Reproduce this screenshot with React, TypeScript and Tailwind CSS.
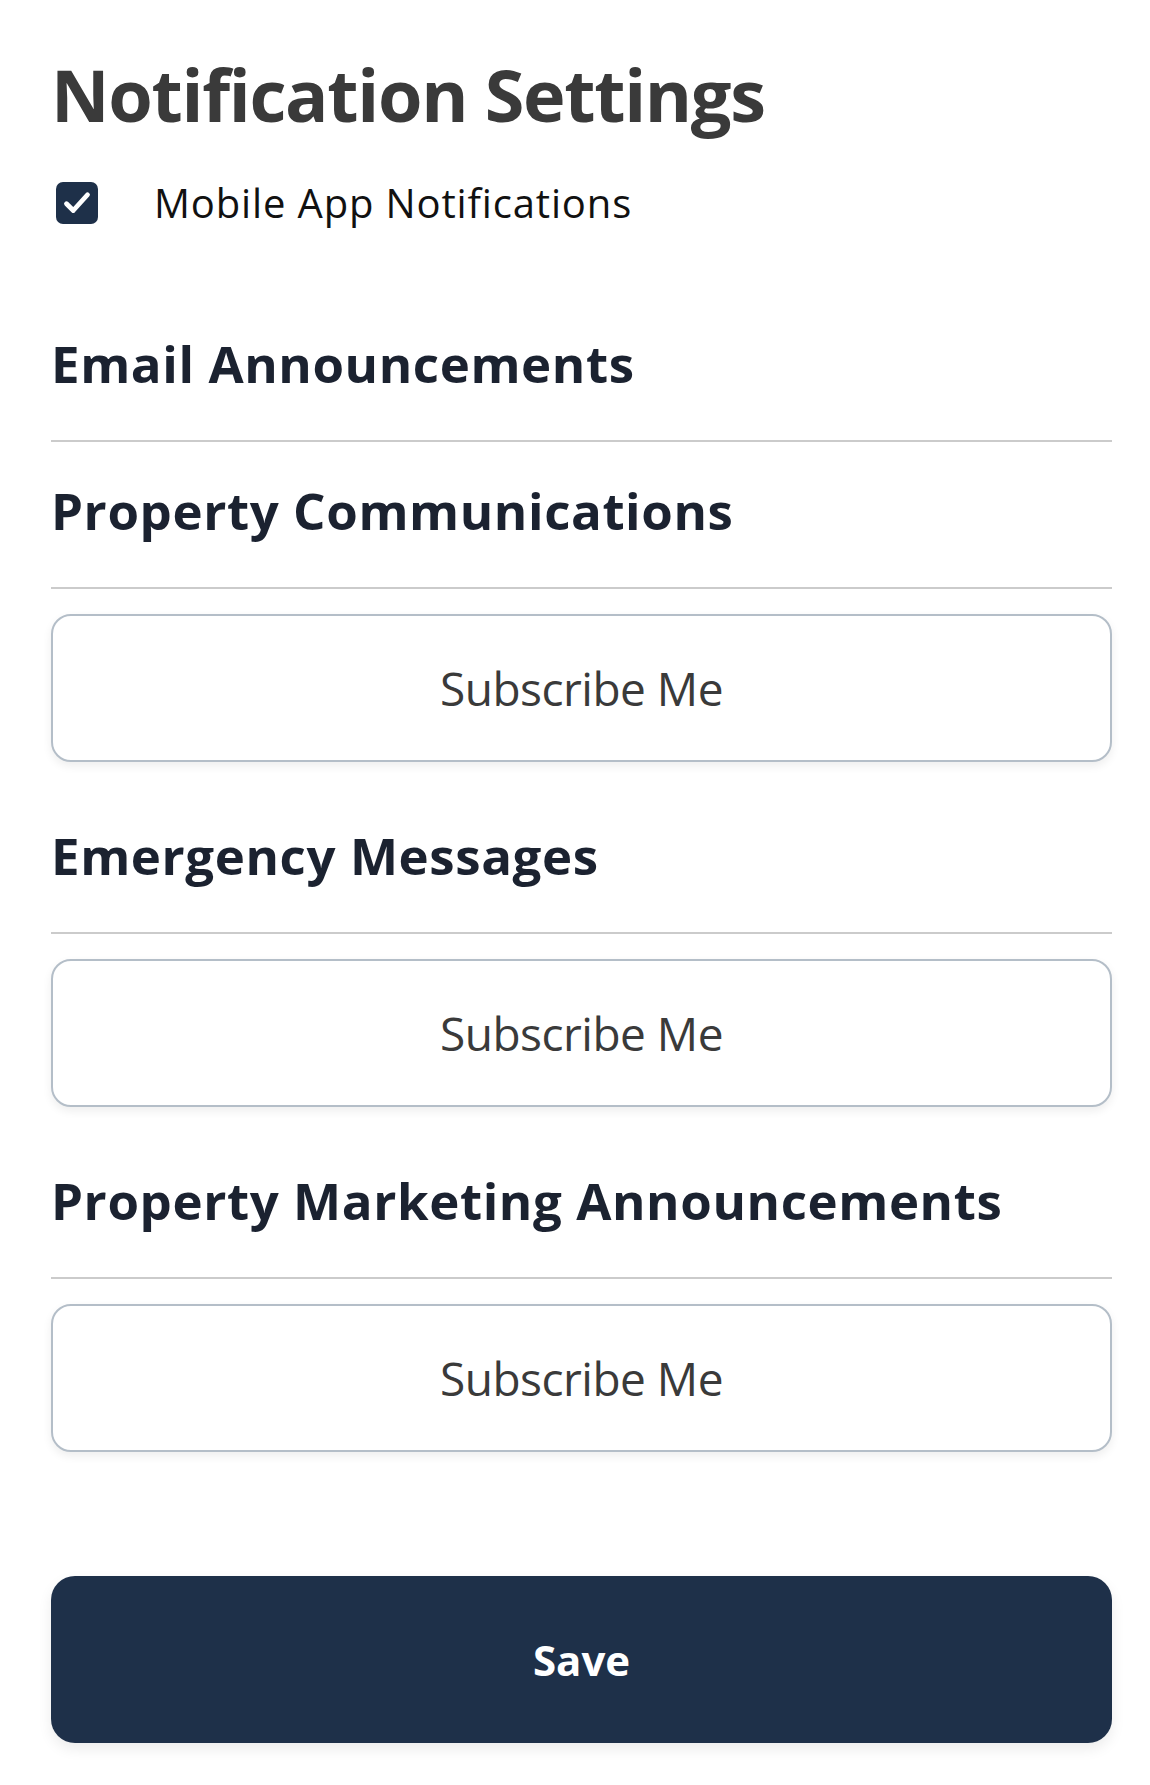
import { useState } from 'react';

type Section = { title: string; subscribable: boolean };

const SECTIONS: Section[] = [
  { title: 'Email Announcements', subscribable: false },
  { title: 'Property Communications', subscribable: true },
  { title: 'Emergency Messages', subscribable: true },
  { title: 'Property Marketing Announcements', subscribable: true },
];

function SectionHeading({ title }: { title: string }) {
  return (
    <div>
      <h2 className="text-[51px] leading-[51px] font-bold tracking-[0.6px] text-[#1b2230] mb-[51px]">{title}</h2>
      <div className="h-[2px] bg-[#cbcbcb]" />
    </div>
  );
}

function SubscribeButton() {
  return (
    <button className="mt-[25px] h-[148px] w-full rounded-[20px] border-2 border-[#b4bec8] bg-white text-[46px] font-medium tracking-[-0.5px] text-[#3a3a3a] shadow-[0_4px_10px_rgba(0,0,0,0.07)]">
      Subscribe Me
    </button>
  );
}

export default function App() {
  const [mobile, setMobile] = useState(true);

  return (
    <div className="min-h-[1785px] bg-white pl-[51px] pr-[38px] pt-[58px] font-['Open_Sans',sans-serif]">
      <h1 className="text-[72px] leading-[72px] font-bold tracking-[-1.3px] text-[#3a3a3a]">Notification Settings</h1>

      <label className="mt-[52px] flex h-[42px] items-center">
        <button
          onClick={() => setMobile(!mobile)}
          className="ml-[5px] flex h-[42px] w-[42px] items-center justify-center rounded-[7px] bg-[#1e3049]"
        >
          {mobile && (
            <svg width="36" height="36" viewBox="0 0 24 24" fill="none">
              <path d="M5 12.5l4.5 4.5L19 6.5" stroke="white" strokeWidth="3.2" strokeLinecap="round" strokeLinejoin="round" />
            </svg>
          )}
        </button>
        <span className="ml-[56px] text-[40px] tracking-[0.85px] text-[#111111]">Mobile App Notifications</span>
      </label>

      <div className="mt-[114px]">
        <SectionHeading title={SECTIONS[0].title} />
      </div>

      <div className="mt-[43px]">
        <SectionHeading title={SECTIONS[1].title} />
        <SubscribeButton />
      </div>

      {SECTIONS.slice(2).map((s) => (
        <div key={s.title} className="mt-[68px]">
          <SectionHeading title={s.title} />
          {s.subscribable && <SubscribeButton />}
        </div>
      ))}

      <button className="mt-[124px] h-[167px] w-full rounded-[24px] bg-[#1e3049] text-[42px] font-bold text-white shadow-[0_6px_14px_rgba(0,0,0,0.08)]">
        Save
      </button>
    </div>
  );
}
